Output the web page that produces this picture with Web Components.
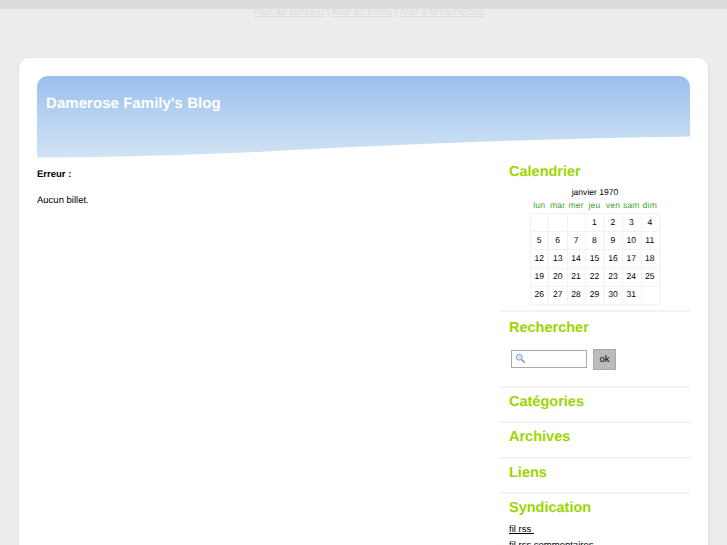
<!DOCTYPE html>
<html lang="fr">
<head>
<meta charset="utf-8">
<title>Damerose Family's Blog</title>
<style>
    html { height: 545px; overflow: hidden; }
    body { margin: 0; background: #ededed; font-family: "Liberation Sans", Arial, sans-serif; color: #000; text-rendering: geometricPrecision; }
</style>
</head>
<body>
<skip-links></skip-links>
<blog-page>
    <blog-header title-text="Damerose Family's Blog"></blog-header>
    <blog-main slot="main"></blog-main>
    <side-box slot="side" heading="Calendrier" first><mini-calendar></mini-calendar></side-box>
    <side-box slot="side" heading="Rechercher" spaced><search-form></search-form></side-box>
    <side-box slot="side" heading="Catégories"></side-box>
    <side-box slot="side" heading="Archives"></side-box>
    <side-box slot="side" heading="Liens"></side-box>
    <side-box slot="side" heading="Syndication"><feed-links></feed-links></side-box>
</blog-page>
<script>
class SkipLinks extends HTMLElement {
    connectedCallback() {
        this.attachShadow({ mode: 'open' });
        this.shadowRoot.innerHTML = `
            <style>
                :host { display: block; border-top: 9px solid #dcdcdc; height: 48px; text-align: center; font-size: 9.8px; line-height: 7px; color: #dcdcdc; padding-left: 10px; }
                a { color: #dcdcdc; text-decoration: underline; }
            </style>
            <a href="#">Aller au contenu</a> | <a href="#">Aller au menu</a> | <a href="#">Aller à la recherche</a>
        `;
    }
}

class BlogPage extends HTMLElement {
    connectedCallback() {
        this.attachShadow({ mode: 'open' });
        this.shadowRoot.innerHTML = `
            <style>
                :host { display: block; box-sizing: border-box; width: 693px; margin-left: 17px; padding: 18px 18px 40px; background: #fff; border: 1px solid #e6e6e6; border-width: 1px 2px 0; border-radius: 11px 11px 0 0; height: 600px; }
                .cols { display: flex; justify-content: space-between; }
                .main { width: 440px; }
                .side { width: 190px; }
            </style>
            <slot></slot>
            <div class="cols">
                <div class="main"><slot name="main"></slot></div>
                <div class="side"><slot name="side"></slot></div>
            </div>
        `;
    }
}

class BlogHeader extends HTMLElement {
    connectedCallback() {
        this.attachShadow({ mode: 'open' });
        this.shadowRoot.innerHTML = `
            <style>
                :host { display: block; position: relative; height: 82px; box-sizing: border-box; padding: 19px 9px 0; border-radius: 11px 11px 0 0; background: linear-gradient(#9bbfee, #d2e4f4); overflow: hidden; }
                h1 { margin: 0; font-size: 15px; line-height: 18px; letter-spacing: .05px; font-weight: bold; color: #fff; }
                svg { position: absolute; left: 0; bottom: 0; display: block; }
            </style>
            <h1>${this.getAttribute('title-text')}</h1>
            <svg width="653" height="22" viewBox="0 0 653 22"><path d="M0 22 L0 21.5 C60 21.5 130 20 220 16 C330 10 480 3 653 0.5 L653 22 Z" fill="#fff"/></svg>
        `;
    }
}

class BlogMain extends HTMLElement {
    connectedCallback() {
        this.attachShadow({ mode: 'open' });
        this.shadowRoot.innerHTML = `
            <style>
                :host { display: block; padding-top: 11px; font-size: 9.5px; line-height: 12px; }
                p { margin: 0 0 14px; }
            </style>
            <p><strong>Erreur :</strong></p>
            <p>Aucun billet.</p>
        `;
    }
}

class SideBox extends HTMLElement {
    connectedCallback() {
        this.attachShadow({ mode: 'open' });
        this.shadowRoot.innerHTML = `
            <style>
                :host { display: block; border-top: 2px solid #f3f3f3; padding: 0 9px; }
                :host([first]) { border-top: 0; }
                h2 { margin: 0; padding: 4px 0 9.3px; font-size: 14.5px; line-height: 20px; font-weight: bold; color: #9bd600; }
                :host([first]) h2 { padding-bottom: 4px; }
                :host([spaced]) h2 { padding: 6px 0 7px; }
            </style>
            <h2>${this.getAttribute('heading')}</h2>
            <slot></slot>
        `;
    }
}

class MiniCalendar extends HTMLElement {
    connectedCallback() {
        this.attachShadow({ mode: 'open' });
        const days = ['lun', 'mar', 'mer', 'jeu', 'ven', 'sam', 'dim'];
        const cells = ['', '', '', 1, 2, 3, 4];
        for (let d = 5; d <= 31; d++) cells.push(d);
        cells.push('');
        let rows = '';
        for (let i = 0; i < cells.length; i += 7) {
            rows += '<tr>' + cells.slice(i, i + 7).map(c => `<td>${c}</td>`).join('') + '</tr>';
        }
        this.shadowRoot.innerHTML = `
            <style>
                :host { display: block; padding: 0 0 5px 21px; font-size: 8.55px; }
                table { border-collapse: collapse; table-layout: fixed; width: 130px; }
                caption { line-height: 12px; padding: 0 0 1px; }
                th { font-weight: normal; color: #3f9f32; line-height: 12px; padding: 0 1px 2px 0; letter-spacing: .2px; }
                td { border: 1px solid #f2f2f2; text-align: center; height: 15.2px; padding: 0 1px 2px 0; line-height: 12px; }
            </style>
            <table>
                <caption>janvier 1970</caption>
                <thead><tr>${days.map(d => `<th>${d}</th>`).join('')}</tr></thead>
                <tbody>${rows}</tbody>
            </table>
        `;
    }
}

class SearchForm extends HTMLElement {
    connectedCallback() {
        this.attachShadow({ mode: 'open' });
        this.shadowRoot.innerHTML = `
            <style>
                :host { display: flex; align-items: center; gap: 6px; padding: 4px 0 16px 2px; }
                .field { position: relative; box-sizing: border-box; width: 76px; height: 18px; border: 1px solid #aaa; background: #fff; }
                svg { position: absolute; left: 3px; top: 2px; }
                button { box-sizing: border-box; width: 23px; height: 21px; padding: 0 0 2px; background: #bbb; border: 1px solid #a8a8a8; font: 9.5px "Liberation Sans", Arial, sans-serif; color: #000; }
            </style>
            <div class="field">
                <svg width="11" height="11" viewBox="0 0 11 11">
                    <circle cx="4.2" cy="4.2" r="3" fill="#d4e3f5" stroke="#8ea6c4"/>
                    <path d="M6.5 6.5 L9.8 9.8" stroke="#c08a58" stroke-width="1.6"/>
                </svg>
            </div>
            <button type="button">ok</button>
        `;
    }
}

class FeedLinks extends HTMLElement {
    connectedCallback() {
        this.attachShadow({ mode: 'open' });
        this.shadowRoot.innerHTML = `
            <style>
                :host { display: block; font-size: 9.5px; line-height: 12px; margin-top: -3px; }
                a { display: block; color: #000; margin-bottom: 4px; }
            </style>
            <a href="#">fil rss&nbsp;</a>
            <a href="#">fil rss commentaires</a>
        `;
    }
}

customElements.define('skip-links', SkipLinks);
customElements.define('blog-page', BlogPage);
customElements.define('blog-header', BlogHeader);
customElements.define('blog-main', BlogMain);
customElements.define('side-box', SideBox);
customElements.define('mini-calendar', MiniCalendar);
customElements.define('search-form', SearchForm);
customElements.define('feed-links', FeedLinks);
</script>
</body>
</html>
